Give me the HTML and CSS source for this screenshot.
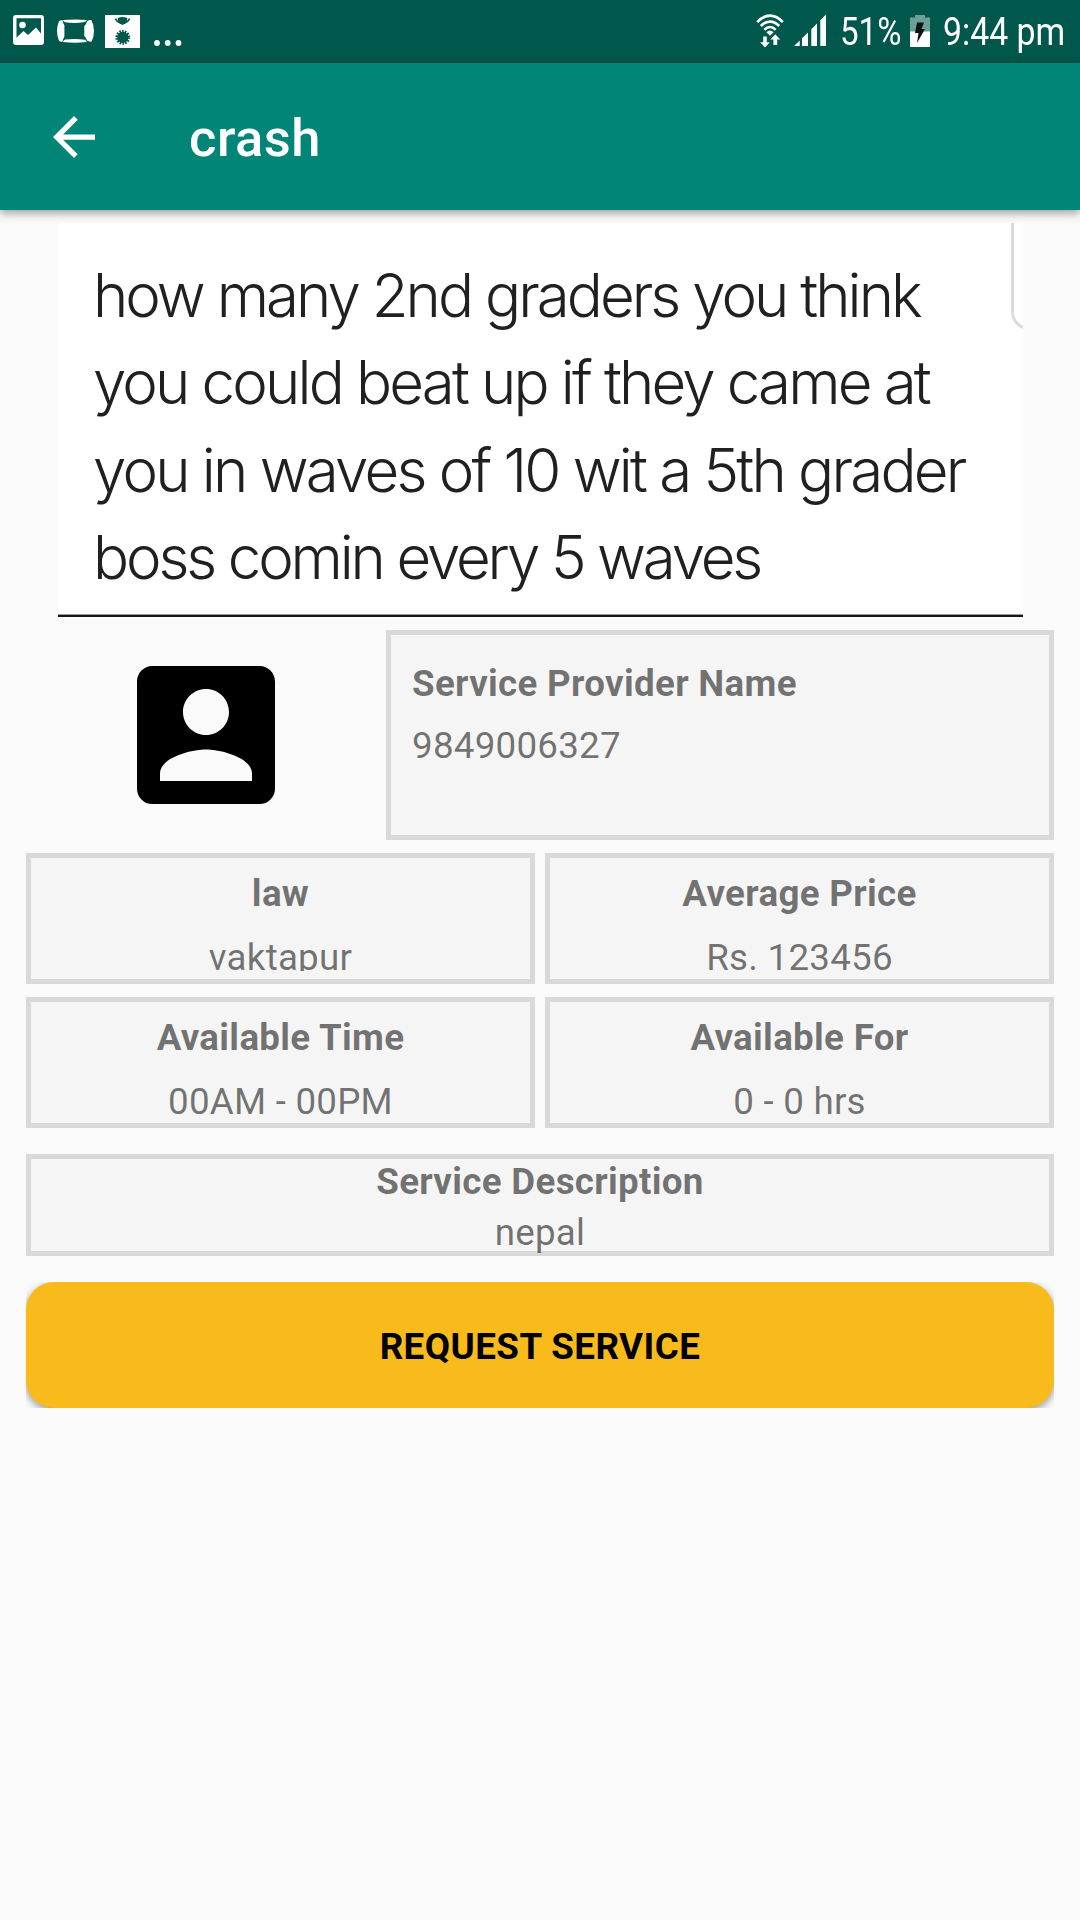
FILE: index.html
```html
<!DOCTYPE html>
<html lang="en">
<head>
<meta charset="utf-8">
<title>crash</title>
<link rel="stylesheet" href="styles.css">
</head>
<body>
<div class="status">
  <svg class="ic-photo" width="31" height="30" viewBox="0 0 31 30"><path fill="#fff" fill-rule="evenodd" d="M3 0h25a3 3 0 0 1 3 3v24a3 3 0 0 1-3 3H3a3 3 0 0 1-3-3V3a3 3 0 0 1 3-3zM3.500 3.200V22.500L10.500 16l4.500 4 8-7.500 5 6V3.200z"/><circle cx="9.500" cy="10" r="3.300" fill="#fff"/></svg>
  <svg class="ic-car" width="38" height="24" viewBox="0 0 38 24" fill="#fff"><path d="M2 2Q3.500 1 5.500 1.300 6 4 7.400 6.500V17.500Q6 20 5.500 22.500 3.500 23 2 22 0 17 0 12T2 2zM30 2.500Q32 .8 34.500 1.200 37 6 37 12T34.500 22.500Q32 23 30 21.500 29.500 19 27.300 17V7Q29.500 5 30 2.500zM5.800 1Q18-.2 30 1 29.500 2 28 3Q18 4.600 8 3.300 6.500 2.500 5.800 1zM5.800 23Q18 24.400 30 23 29.500 21.600 28 20.800 18 19.300 8 20.600 6.500 21.500 5.800 23z"/></svg>
  <svg class="ic-app" width="35" height="33" viewBox="0 0 35 33"><path fill="#fff" d="M0 0h35v33H0z"/><path fill="none" stroke="#00574b" stroke-width="1.600" d="M10.500 3.500Q12 8 17.500 8T24.500 3.500"/><path fill="#00574b" d="M12.800 3q4.700-2 9.400 0 1 5-4.700 7Q11.800 8 12.800 3z"/><circle cx="17.800" cy="22.400" r="5.600" fill="#00574b"/><circle cx="17.800" cy="22.400" r="6.100" fill="none" stroke="#00574b" stroke-width="2.600" stroke-dasharray="1.600 1.130"/></svg>
  <svg class="ic-more" width="28" height="6" viewBox="0 0 28 6" fill="#fff"><circle cx="3" cy="3" r="2.900"/><circle cx="13.700" cy="3" r="2.900"/><circle cx="24.500" cy="3" r="2.900"/></svg>
  <svg class="ic-wifi" width="28" height="34" viewBox="0 0 28 34"><g fill="none" stroke="#fff" stroke-width="2.700"><path d="M1.200 8.200Q7 1.600 14 1.600t12.800 6.600M4.800 12Q9 7.600 14 7.600T23.200 12M8.400 15.800q2.500-2.800 5.600-2.800t5.600 2.800"/></g><path fill="#fff" d="M10.400 18.200q3.600-3.200 7.200 0L14 21.800zM7.200 22.500h3.600v5.700h3L9 33.400l-4.900-5.200h3.100zM17.400 31v-5.500h-3l4.900-5.200 4.900 5.200h-3V31z"/></svg>
  <svg class="ic-signal" width="33" height="32" viewBox="0 0 33 32" fill="#fff"><path d="M0 32l5.700-5.400V32zM8 24.300l6-5.800V32H8zM17.300 15.300l5.700-5.800V32h-5.700zM26.300 6.200L32 .4V32h-5.700z"/></svg>
  <div class="pct"><span>51%</span></div>
  <svg class="ic-batt" width="20" height="32" viewBox="0 0 20 32"><path fill="#6b9f97" d="M5 0h10v2.500h5V17H0V2.500h5z"/><path fill="#fff" d="M0 16.500h20V32H0z"/><path fill="#111" d="M7 7.500h7L11.500 14H15L7 28l1.500-10H5z"/></svg>
  <div class="time"><span>9:44 pm</span></div>
</div>
<header class="bar">
  <svg class="back" width="42" height="42" viewBox="4 4 16 16"><path fill="#fff" d="M20 11H7.830l5.590-5.590L12 4l-8 8 8 8 1.410-1.410L7.830 13H20v-2z"/></svg>
  <h1 class="title">crash</h1>
</header>
<main class="content">
  <section class="photo">
    <div class="photo-text">
      <p class="l1">how many 2nd graders you think</p>
      <p class="l2">you could beat up if they came at</p>
      <p class="l3">you in waves of 10 wit a 5th grader</p>
      <p class="l4">boss comin every 5 waves</p>
    </div>
    <div class="bubble"></div>
  </section>
  <section class="provider">
    <div class="avatar"><svg width="184" height="184" viewBox="0 0 24 24"><path d="M3 5v14c0 1.100.89 2 2 2h14c1.100 0 2-.9 2-2V5c0-1.100-.9-2-2-2H5c-1.110 0-2 .9-2 2zm12 4c0 1.660-1.340 3-3 3s-3-1.340-3-3 1.340-3 3-3 3 1.340 3 3zm-9 8c0-2 4-3.100 6-3.100s6 1.100 6 3.100v1H6v-1z"/></svg></div>
    <div class="box who"><b>Service Provider Name</b><span>9849006327</span></div>
  </section>
  <section class="grid">
    <div class="box cell"><b>law</b><span class="clip">vaktapur</span></div>
    <div class="box cell"><b>Average Price</b><span>Rs. 123456</span></div>
    <div class="box cell"><b>Available Time</b><span>00AM - 00PM</span></div>
    <div class="box cell"><b>Available For</b><span>0 - 0 hrs</span></div>
  </section>
  <section class="box desc"><b>Service Description</b><span>nepal</span></section>
  <div class="action"><button class="btn">REQUEST SERVICE</button></div>
</main>
</body>
</html>
```
FILE: styles.css
```css
* { box-sizing: border-box; margin: 0; padding: 0; }
body { width: 1080px; height: 1920px; background: #fafafa; font-family: Roboto, sans-serif; overflow: hidden; }
svg { display: block; flex: none; }

.status { height: 63px; background: #00574b; display: flex; align-items: flex-start; padding: 0 16px 0 13px; color: #fff; }
.ic-photo { margin-top: 15px; }
.ic-car { margin: 19px 0 0 13px; }
.ic-app { margin: 15px 0 0 10px; }
.ic-more { margin: 40px auto 0 14px; }
.ic-wifi { margin-top: 14px; }
.ic-signal { margin: 14px 0 0 10px; }
.pct, .time { height: 63px; font-size: 38px; line-height: 65px; white-space: nowrap; }
.pct { width: 60px; margin-left: 13px; }
.time { width: 121px; margin-left: 13px; }
.pct span, .time span { display: inline-block; transform-origin: 0 50%; transform: scaleX(.87); }
.time span { transform: scaleX(.89); }
.ic-batt { margin: 15px 0 0 10px; }

.bar { position: relative; height: 147px; background: #008577; display: flex; align-items: center; padding-left: 53px; box-shadow: 0 3px 9px rgba(0,0,0,.38); }
.title { margin: 3px 0 0 94px; color: #fff; font-size: 52.5px; line-height: 62px; font-weight: 500; letter-spacing: .5px; }

.content { padding: 13px 26px 0; }
.photo { position: relative; width: 965px; height: 394px; margin-left: 32px; background: #fff; overflow: hidden; border-bottom: 2px solid #161616; box-shadow: inset 0 -1px #999; }
.photo-text { padding: 29px 0 0 35px; font-family: Inter, "Liberation Sans", sans-serif; font-weight: 330; font-size: 60px; line-height: 87.3px; color: #202020; white-space: nowrap; filter: blur(.6px); }
.l1 { letter-spacing: -2.97px; }
.l2 { letter-spacing: -2.84px; }
.l3 { letter-spacing: -2.78px; }
.l4 { letter-spacing: -3.15px; }
.bubble { position: absolute; left: 953px; top: -20px; width: 60px; height: 127px; border: 3px solid #dcdcdc; border-radius: 18px; }

.provider { display: flex; margin-top: 13px; height: 210px; }
.avatar { width: 360px; padding: 13px 0 0 88px; }
.box { background: #f5f5f5; border: 5px solid #d9d9d9; color: rgba(0,0,0,.54); font-size: 36.75px; line-height: 43px; letter-spacing: .23px; display: flex; flex-direction: column; }
.box b { letter-spacing: .3px; }
.who { flex: 1; padding: 27px 21px 0; gap: 19px; }
.grid { display: grid; grid-template-columns: 509px 509px; gap: 13px 10px; margin-top: 13px; }
.cell { height: 131px; padding-top: 14px; gap: 21px; align-items: center; }
.clip { height: 35px; overflow: hidden; }
.desc { height: 102px; margin-top: 26px; padding-top: 1px; gap: 8px; align-items: center; }
.action { margin-top: 26px; height: 126px; overflow: hidden; }
.btn { display: block; width: 100%; height: 126px; border: 0; border-radius: 28px; background: #f9bb1b; color: #000; font: 700 36.75px/43px Roboto, sans-serif; letter-spacing: .45px; padding-top: 2px; box-shadow: 0 3px 9px rgba(0,0,0,.4); }
```
